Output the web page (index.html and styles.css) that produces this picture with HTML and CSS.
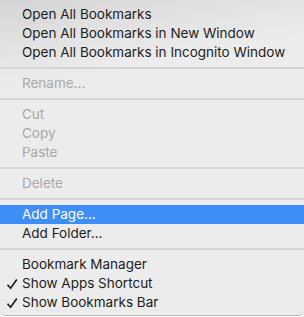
FILE: index.html
```html
<!DOCTYPE html>
<html lang="en">
  <head>
    <meta charset="UTF-8" />
    <meta name="viewport" content="width=device-width, initial-scale=1.0" />
    <title>Bookmarks menu</title>
    <link rel="stylesheet" href="styles.css">
  </head>
  <body>
    <div class="menu">
      <div class="item">Open All Bookmarks</div>
      <div class="item">Open All Bookmarks in New Window</div>
      <div class="item">Open All Bookmarks in Incognito Window</div>
      <div class="sep"></div>
      <div class="item off">Rename...</div>
      <div class="sep"></div>
      <div class="item off">Cut</div>
      <div class="item off">Copy</div>
      <div class="item off">Paste</div>
      <div class="sep"></div>
      <div class="item off">Delete</div>
      <div class="sep"></div>
      <div class="item active">Add Page...</div>
      <div class="item">Add Folder...</div>
      <div class="sep"></div>
      <div class="item">Bookmark Manager</div>
      <div class="item">
        <svg class="check" viewBox="0 0 12 12"><path d="M1.5 6.8 L4.6 10.2 L10.8 1.6" /></svg>
        Show Apps Shortcut
      </div>
      <div class="item">
        <svg class="check" viewBox="0 0 12 12"><path d="M1.5 6.8 L4.6 10.2 L10.8 1.6" /></svg>
        Show Bookmarks Bar
      </div>
    </div>
  </body>
</html>
```

FILE: styles.css
```css
* {
  margin: 0;
  padding: 0;
  box-sizing: border-box;
}
html,
body {
  width: 304px;
  height: 317px;
  background-color: #fff;
  overflow: hidden;
}
.menu {
  width: 304px;
  height: 316px;
  padding: 5px 0 3px;
  background: linear-gradient(170deg, #d5d5d5 0%, #e3e3e3 14%, #ececec 24%, #ececec 100%);
  border-bottom: 1px solid #b9b9b9;
  border-radius: 0 0 5px 5px;
  font-family: Inter, "Liberation Sans", sans-serif;
  font-size: 13.5px;
  color: #1c1c1c;
}
.item {
  position: relative;
  height: 19px;
  line-height: 19px;
  padding-left: 22px;
  white-space: nowrap;
}
.item.off {
  color: #a9a9a9;
}
.item.active {
  background-color: #3e8ef7;
  color: #fff;
}
.sep {
  height: 12px;
  display: flex;
  align-items: center;
}
.sep::after {
  content: "";
  display: block;
  width: 100%;
  height: 2px;
  background-color: #d5d5d5;
}
/* check mark in front of the toggled items */
.check {
  position: absolute;
  left: 6px;
  top: 4px;
  width: 12px;
  height: 12px;
  fill: none;
  stroke: #1c1c1c;
  stroke-width: 1.7;
}
```
